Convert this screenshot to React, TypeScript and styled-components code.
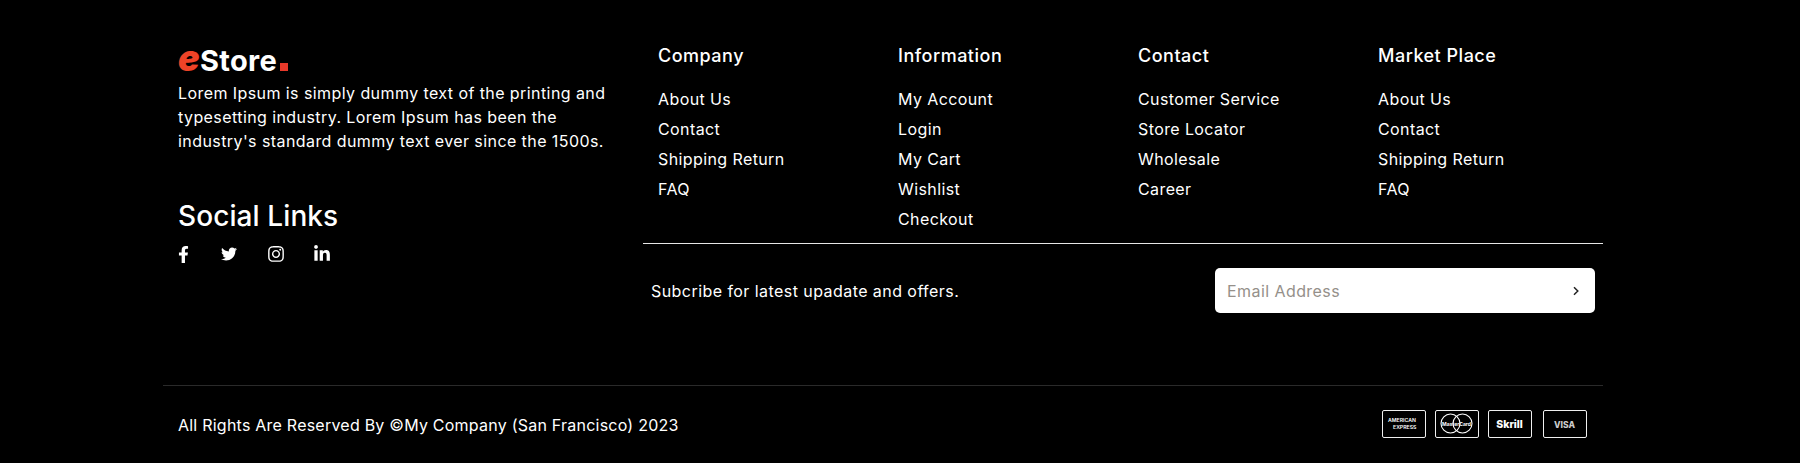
import React from 'react'
import styled, { createGlobalStyle } from 'styled-components'
import { FaFacebookF, FaTwitter, FaInstagram, FaLinkedinIn } from 'react-icons/fa'

const GlobalStyle = createGlobalStyle`
  html, body {
    margin: 0;
    padding: 0;
    background: #000;
  }
  body {
    font-family: "Inter", "Open Sans", "Liberation Sans", sans-serif;
  }
  * {
    box-sizing: border-box;
  }
`

const columns = [
  { title: 'Company', links: ['About Us', 'Contact', 'Shipping Return', 'FAQ'] },
  { title: 'Information', links: ['My Account', 'Login', 'My Cart', 'Wishlist', 'Checkout'] },
  { title: 'Contact', links: ['Customer Service', 'Store Locator', 'Wholesale', 'Career'] },
  { title: 'Market Place', links: ['About Us', 'Contact', 'Shipping Return', 'FAQ'] },
]

const App: React.FC = () => {
  return (
    <StyledFooter>
      <GlobalStyle />
      <StyledContainer>
        <StyledTop>
          <StyledAbout>
            <StyledLogo>
              <StyledLogoMark>e</StyledLogoMark>Store<StyledLogoDot />
            </StyledLogo>
            <StyledText>
              Lorem Ipsum is simply dummy text of the printing and typesetting industry. Lorem Ipsum has been the
              industry's standard dummy text ever since the 1500s.
            </StyledText>
            <StyledSocialTitle>Social Links</StyledSocialTitle>
            <StyledSocials>
              <StyledSocialLink href="#"><FaFacebookF size={17} /></StyledSocialLink>
              <StyledSocialLink href="#"><FaTwitter size={16} /></StyledSocialLink>
              <StyledSocialLink href="#"><FaInstagram size={18} /></StyledSocialLink>
              <StyledSocialLink href="#"><FaLinkedinIn size={18} /></StyledSocialLink>
            </StyledSocials>
          </StyledAbout>
          <StyledRight>
            <StyledColumns>
              {columns.map((col) => (
                <StyledColumn key={col.title}>
                  <StyledColumnTitle>{col.title}</StyledColumnTitle>
                  {col.links.map((link) => (
                    <StyledLink href="#" key={link}>{link}</StyledLink>
                  ))}
                </StyledColumn>
              ))}
            </StyledColumns>
            <StyledSubscribe>
              <StyledSubscribeText>Subcribe for latest upadate and offers.</StyledSubscribeText>
              <StyledForm>
                <StyledInput placeholder="Email Address" />
                <StyledSend aria-label="Subscribe">
                  <svg width="8" height="10" viewBox="0 0 8 10" fill="none">
                    <path d="M2 1.2 L5.8 5 L2 8.8" stroke="#222" strokeWidth="1.5" />
                  </svg>
                </StyledSend>
              </StyledForm>
            </StyledSubscribe>
          </StyledRight>
        </StyledTop>
        <StyledBottom>
          <StyledCopy>All Rights Are Reserved By ©My Company (San Francisco) 2023</StyledCopy>
          <StyledCards>
            <StyledCard>
              <svg width="41" height="25" viewBox="0 0 41 25">
                <text x="5" y="10.5" fontSize="5.2" fontWeight="600" fill="#fff">AMERICAN</text>
                <text x="10" y="17.5" fontSize="5.2" fontWeight="600" fill="#fff">EXPRESS</text>
              </svg>
            </StyledCard>
            <StyledCard>
              <svg width="41" height="25" viewBox="0 0 41 25">
                <circle cx="14.5" cy="12.5" r="9.5" fill="none" stroke="#fff" strokeWidth="1.1" />
                <circle cx="26.5" cy="12.5" r="9.5" fill="none" stroke="#fff" strokeWidth="1.1" />
                <text x="20.5" y="14.5" fontSize="5" fontWeight="700" fill="#fff" textAnchor="middle">MasterCard</text>
              </svg>
            </StyledCard>
            <StyledCard>
              <svg width="41" height="25" viewBox="0 0 41 25">
                <text x="20.5" y="16.5" fontSize="10.5" fontWeight="800" fill="#fff" textAnchor="middle">Skrill</text>
              </svg>
            </StyledCard>
            <StyledCard $gap>
              <svg width="41" height="25" viewBox="0 0 41 25">
                <text x="20.5" y="16.5" fontSize="8.5" fontWeight="800" fill="#ccc" textAnchor="middle">VISA</text>
              </svg>
            </StyledCard>
          </StyledCards>
        </StyledBottom>
      </StyledContainer>
    </StyledFooter>
  )
}

const StyledFooter = styled.footer`
  background: #000;
  color: #fff;
  height: 463px;
  overflow: hidden;
`

const StyledContainer = styled.div`
  width: 1440px;
  margin: 0 0 0 163px;
`

const StyledTop = styled.div`
  display: flex;
  height: 385px;
`

const StyledAbout = styled.div`
  width: 480px;
  padding: 44px 15px 0 15px;
`

const StyledLogo = styled.div`
  display: flex;
  align-items: baseline;
  height: 28px;
  margin-bottom: 9px;
  font-size: 29px;
  line-height: 28px;
  font-weight: 700;
  letter-spacing: 0.3px;
  color: #fff;
`

const StyledLogoMark = styled.span`
  color: #ee4327;
  font-size: 36px;
  font-weight: 900;
  font-style: italic;
  line-height: 28px;
`

const StyledLogoDot = styled.span`
  width: 8px;
  height: 8px;
  margin-left: 3px;
  background: #e8392a;
`

const StyledText = styled.p`
  margin: 0;
  font-size: 16px;
  line-height: 24px;
  letter-spacing: 0.42px;
  width: 450px;
`

const StyledSocialTitle = styled.h3`
  margin: 42px 0 0;
  font-size: 28px;
  line-height: 42px;
  font-weight: 500;
  letter-spacing: 0.1px;
`

const StyledSocials = styled.div`
  display: flex;
  align-items: center;
  margin: 5px 0 0 -3px;
  height: 24px;
`

const StyledSocialLink = styled.a`
  display: flex;
  width: 46px;
  color: #fff;
`

const StyledRight = styled.div`
  width: 960px;
  display: flex;
  flex-direction: column;
`

const StyledColumns = styled.div`
  display: flex;
  height: 243px;
  padding-top: 44px;
`

const StyledColumn = styled.div`
  width: 240px;
  padding: 0 15px;
  display: flex;
  flex-direction: column;
`

const StyledColumnTitle = styled.h4`
  margin: 0 0 16px;
  font-size: 18px;
  line-height: 24px;
  font-weight: 500;
  letter-spacing: 0.5px;
`

const StyledLink = styled.a`
  color: #fff;
  text-decoration: none;
  font-size: 16px;
  line-height: 30px;
  letter-spacing: 0.4px;
`

const StyledSubscribe = styled.div`
  display: flex;
  align-items: center;
  justify-content: space-between;
  border-top: 1px solid #e6e6e6;
  padding: 24px 8px 0;
`

const StyledSubscribeText = styled.span`
  font-size: 16px;
  line-height: 44px;
  letter-spacing: 0.44px;
`

const StyledForm = styled.div`
  display: flex;
  align-items: center;
  width: 380px;
  height: 45px;
  background: #fff;
  border-radius: 5px;
`

const StyledInput = styled.input`
  flex: 1;
  min-width: 0;
  height: 100%;
  border: 0;
  outline: 0;
  background: transparent;
  padding: 0 12px;
  font-family: inherit;
  font-size: 16px;
  letter-spacing: 0.43px;
  color: #222;
  &::placeholder {
    color: #95908a;
    opacity: 1;
  }
`

const StyledSend = styled.button`
  display: flex;
  align-items: center;
  justify-content: center;
  width: 38px;
  height: 100%;
  padding: 0;
  border: 0;
  background: none;
`

const StyledBottom = styled.div`
  display: flex;
  align-items: center;
  justify-content: space-between;
  height: 78px;
  padding: 0 16px 0 15px;
  border-top: 1px solid #2a2a2a;
`

const StyledCopy = styled.span`
  font-size: 16px;
  line-height: 24px;
  letter-spacing: 0.23px;
`

const StyledCards = styled.div`
  display: flex;
  align-items: center;
  gap: 9px;
  margin-bottom: 2px;
`

const StyledCard = styled.div<{ $gap?: boolean }>`
  display: flex;
  width: 44px;
  height: 28px;
  border: 1.5px solid #f0f0f0;
  border-radius: 2px;
  margin-left: ${(props) => (props.$gap ? '2px' : '0')};
`

export default App
